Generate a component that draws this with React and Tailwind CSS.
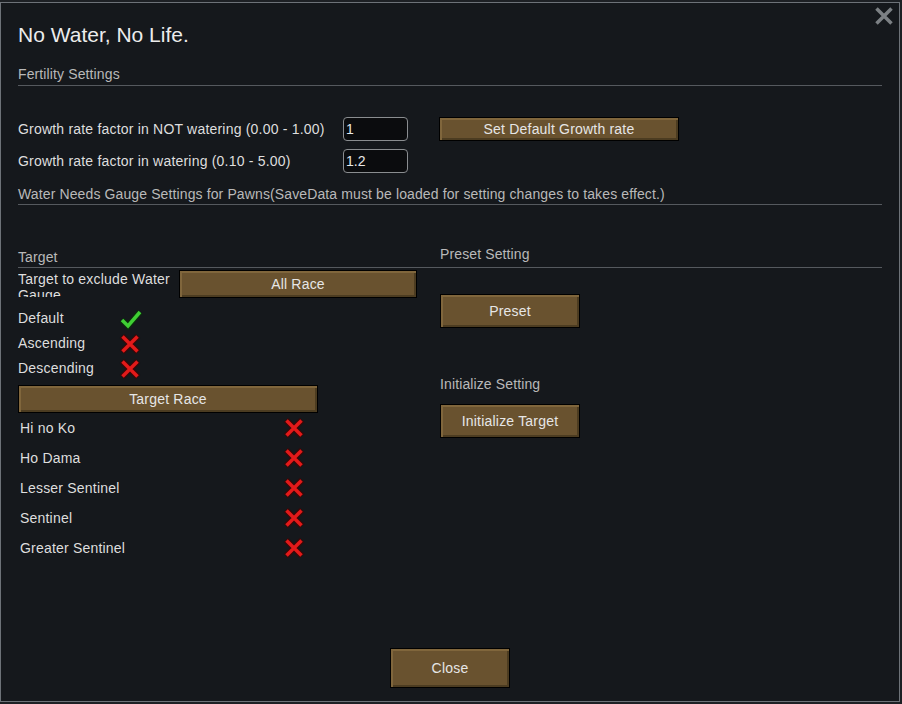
import React from 'react';

const font = { fontFamily: '"Liberation Sans", Arial, sans-serif' };

function Btn({ children, className = '' }) {
  return (
    <div className={`flex items-center justify-center border border-black bg-[#69522f] text-[14px] tracking-[0.2px] text-[#e6e6e6] shadow-[inset_2px_2px_0_#80663c,inset_-2px_-2px_0_#4c3c21] ${className}`}>
      {children}
    </div>
  );
}

function Check() {
  return (
    <svg width="24" height="22" viewBox="0 0 24 22">
      <path d="M3 12 L9 18 L21 4" fill="none" stroke="#0b2e0b" strokeWidth="6" strokeLinejoin="miter" />
      <path d="M3 12 L9 18 L21 4" fill="none" stroke="#3fcf34" strokeWidth="3.5" strokeLinejoin="miter" />
    </svg>
  );
}

function Cross() {
  return (
    <svg width="22" height="22" viewBox="0 0 22 22">
      <path d="M3 3 L19 19 M19 3 L3 19" fill="none" stroke="#3a0707" strokeWidth="6" />
      <path d="M3.5 3.5 L18.5 18.5 M18.5 3.5 L3.5 18.5" fill="none" stroke="#e21a1a" strokeWidth="3.5" />
    </svg>
  );
}

function Field({ value }) {
  return (
    <div className="flex h-[24px] w-[65px] shrink-0 items-center rounded-[4px] border border-[#8a8d90] bg-[#0b0c0e] px-[2px] text-[14px] text-[#e8e8e8]">
      {value}
    </div>
  );
}

const label = 'text-[14px] tracking-[0.2px] text-[#dedede]';
const header = 'text-[14px] tracking-[0.12px] text-[#b9b9b9]';

const races = ['Hi no Ko', 'Ho Dama', 'Lesser Sentinel', 'Sentinel', 'Greater Sentinel'];

export default function App() {
  return (
    <div className="h-[704px] w-[902px] bg-[#1d2024] pt-[2px]" style={font}>
      <div className="relative flex h-[700px] w-[900px] flex-col border border-[#6d7278] bg-[#15181c] px-[17px]">
        {/* close X */}
        <div className="absolute right-[4px] top-[2px]">
          <svg width="22" height="22" viewBox="0 0 22 22">
            <path d="M3.5 3.5 L18.5 18.5 M18.5 3.5 L3.5 18.5" stroke="#7c8084" strokeWidth="3.5" />
          </svg>
        </div>

        <div className="mt-[17px] flex h-[30px] items-center text-[21px] text-[#ececec]">No Water, No Life.</div>

        <div className={`mt-[14px] flex h-[22px] items-center border-b border-[#55595e] ${header}`}>Fertility Settings</div>

        <div className="mt-[31px] flex h-[24px] items-center">
          <div className={`w-[325px] shrink-0 ${label}`}>Growth rate factor in NOT watering (0.00 - 1.00)</div>
          <Field value="1" />
          <Btn className="ml-[31px] h-[24px] w-[240px]">Set Default Growth rate</Btn>
        </div>

        <div className="mt-[8px] flex h-[24px] items-center">
          <div className={`w-[325px] shrink-0 ${label}`}>Growth rate factor in watering (0.10 - 5.00)</div>
          <Field value="1.2" />
        </div>

        <div className={`mt-[11px] flex h-[21px] items-center border-b border-[#55595e] ${header}`}>
          Water Needs Gauge Settings for Pawns(SaveData must be loaded for setting changes to takes effect.)
        </div>

        <div className="mt-[41px] flex">
          {/* left column */}
          <div className="flex w-[422px] flex-col">
            <div className={`flex h-[22px] items-center border-b border-[#55595e] pt-[1px] ${header}`}>Target</div>

            <div className="mt-[2px] flex h-[28px]">
              <div className={`mt-[1px] h-[26px] w-[161px] overflow-hidden leading-[16px] ${label}`}>Target to exclude Water Gauge</div>
              <Btn className="h-[28px] w-[238px]">All Race</Btn>
            </div>

            <div className="mt-[8px] flex flex-col">
              {[['Default', true], ['Ascending', false], ['Descending', false]].map(([l, ok]) => (
                <div key={l} className="flex h-[25px] items-center">
                  <div className={`w-[101px] ${label}`}>{l}</div>
                  {ok ? <Check /> : <Cross />}
                </div>
              ))}
            </div>

            <Btn className="mt-[4px] h-[28px] w-[300px]">Target Race</Btn>

            <div className="flex flex-col">
              {races.map((r) => (
                <div key={r} className="flex h-[30px] items-center pl-[2px]">
                  <div className={`w-[263px] ${label}`}>{r}</div>
                  <Cross />
                </div>
              ))}
            </div>
          </div>

          {/* right column */}
          <div className="flex flex-1 flex-col">
            <div className={`flex h-[22px] items-center border-b border-[#55595e] pb-[5px] ${header}`}>Preset Setting</div>
            <Btn className="mt-[26px] h-[34px] w-[140px]">Preset</Btn>
            <div className={`mt-[46px] flex h-[20px] items-center ${header}`}>Initialize Setting</div>
            <Btn className="mt-[10px] h-[34px] w-[140px]">Initialize Target</Btn>
          </div>
        </div>

        <div className="mb-[13px] mt-auto flex justify-center">
          <Btn className="h-[40px] w-[120px]">Close</Btn>
        </div>
      </div>
    </div>
  );
}
